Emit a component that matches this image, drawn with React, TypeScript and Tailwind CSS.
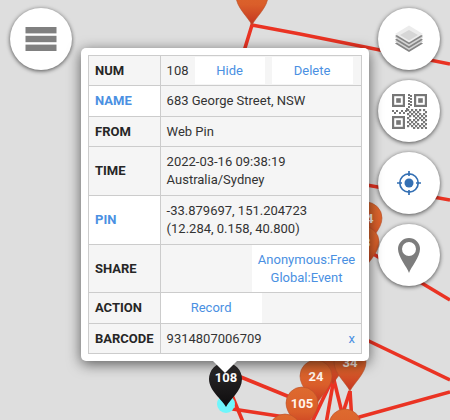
import type { ReactNode } from 'react';

interface Pin {
  x: number;
  y: number;
  label?: string;
}

// x / y is the tip of each pin
const pins: Pin[] = [
  { x: 252, y: 25 },
  { x: 366, y: 247, label: '24' },
  { x: 363, y: 271, label: '23' },
  { x: 333, y: 384 },
  { x: 316, y: 405, label: '24' },
  { x: 350, y: 391, label: '34' },
  { x: 302, y: 432, label: '105' },
  { x: 285, y: 459 },
  { x: 345, y: 454, label: '29' },
];

const routes = [
  'M226 110L252 25L300 34L450 64',
  'M350 182L450 200',
  'M350 240L450 300',
  'M350 332L450 380',
  'M345 421L450 392',
  'M226 371L302 402',
  'M222 371L243 422',
  'M226 408L285 417',
  'M333 378L311 424',
  'M334 378L326 424',
  'M333 376L344 421',
  'M350 391L340 422',
  'M350 391L352 422',
];

const MapPin = ({ x, y, label }: Pin) => (
  <g transform={`translate(${x} ${y})`}>
    <path
      d="M0 0C-4 -8 -16 -18 -16 -29A16 16 0 0 1 16 -29C16 -18 4 -8 0 0Z"
      fill="url(#pinFill)"
      stroke="#b9512a"
      strokeWidth="0.6"
    />
    {label && (
      <text y="-24" textAnchor="middle" className="fill-[#fff4ec] font-['Roboto'] text-[13px] font-bold">
        {label}
      </text>
    )}
  </g>
);

const MapLayer = () => (
  <svg
    className="absolute inset-0 h-full w-full"
    viewBox="0 0 450 420"
    preserveAspectRatio="xMidYMin slice"
    aria-hidden="true"
  >
    <defs>
      <linearGradient id="pinFill" x1="0" y1="0" x2="0" y2="1">
        <stop offset="0" stopColor="#de6a2f" />
        <stop offset="0.55" stopColor="#da5e2a" />
        <stop offset="1" stopColor="#c43420" />
      </linearGradient>
      <linearGradient id="activeFill" x1="0" y1="0" x2="0" y2="1">
        <stop offset="0" stopColor="#2e2c2d" />
        <stop offset="1" stopColor="#0e0c0d" />
      </linearGradient>
    </defs>
    <g fill="none" stroke="#ea3323" strokeWidth="3.6">
      {routes.map((d) => (
        <path key={d} d={d} />
      ))}
    </g>
    {pins.map((pin) => (
      <MapPin key={`${pin.x}-${pin.y}`} {...pin} />
    ))}
    {/* selected pin */}
    <circle cx="226" cy="404" r="9" fill="#6ff6fb" />
    <path d="M226 407C222 399 209 391 209 379A16.5 16.5 0 0 1 242 379C242 391 230 399 226 407Z" fill="url(#activeFill)" />
    <text x="226" y="382" textAnchor="middle" className="fill-white font-['Roboto'] text-[13px] font-bold">
      108
    </text>
  </svg>
);

const RoundButton = ({ label, children }: { label: string; children: ReactNode }) => (
  <button
    type="button"
    aria-label={label}
    className="flex size-[62px] shrink-0 items-center justify-center rounded-full bg-white shadow-[0_1px_4px_rgba(0,0,0,0.65)]"
  >
    {children}
  </button>
);

const MenuIcon = () => (
  <svg width="32" height="24" viewBox="0 0 32 24" fill="#808080">
    <rect x="0.5" width="31" height="6.4" />
    <rect x="0.5" y="8.8" width="31" height="6.4" />
    <rect x="0.5" y="17.6" width="31" height="6.4" />
  </svg>
);

const LayersIcon = () => (
  <svg width="30" height="28" viewBox="0 0 30 28">
    <path d="M1 18.5L15 27L29 18.5L15 10Z" fill="#858585" />
    <path d="M1 16.5L15 25L29 16.5L15 8Z" fill="#d4d4d4" />
    <path d="M1 14.8L15 23.3L29 14.8L15 6.5Z" fill="#858585" />
    <path d="M1 12.8L15 21.3L29 12.8L15 4.5Z" fill="#d4d4d4" />
    <path d="M1 11L15 19.3L29 11L15 3Z" fill="#858585" />
    <path d="M1 9L15 17.5L29 9L15 0.5Z" fill="#ececec" />
    <path d="M6 10L15 5L24 10L15 15.5Z" fill="#d6d6d6" />
  </svg>
);

const qrModules = [
  [16, 0], [18, 1], [16, 3], [18, 4], [16, 6], [18, 7], [16, 9], [18, 10], [16, 12],
  [0, 16], [2, 18], [4, 16], [7, 18], [9, 16], [11, 18], [13, 16], [14, 14],
];

const QrIcon = () => (
  <svg width="35" height="35" viewBox="0 0 35 35" fill="#777">
    {[[0, 0], [22, 0], [0, 22]].map(([x, y]) => (
      <g key={`${x}-${y}`} transform={`translate(${x} ${y})`}>
        <rect x="1.1" y="1.1" width="10.8" height="10.8" fill="none" stroke="#777" strokeWidth="2.2" />
        <rect x="4.2" y="4.2" width="4.6" height="4.6" />
      </g>
    ))}
    {qrModules.map(([x, y]) => (
      <rect key={`${x}-${y}`} x={x} y={y} width="2" height="2" />
    ))}
    {Array.from({ length: 100 }, (_, i) => [i % 10, Math.floor(i / 10)])
      .filter(([c, r]) => (c + r) % 2 === 0 && (c * 3 + r * 5) % 11 !== 4)
      .map(([c, r]) => (
        <rect key={`${c}-${r}`} x={15 + c * 2} y={15 + r * 2} width="2.2" height="2.2" />
      ))}
  </svg>
);

const LocateIcon = () => (
  <svg width="24" height="24" viewBox="0 0 24 24" fill="none" stroke="#3470b4" strokeWidth="1.7">
    <circle cx="12" cy="12" r="9.2" />
    <circle cx="12" cy="12" r="4.5" fill="#3470b4" stroke="none" />
    <path d="M12 0V5M12 19V24M0 12H5M19 12H24" />
  </svg>
);

const PlaceIcon = () => (
  <svg width="22" height="35" viewBox="0 0 22 35" fill="#7d7d7d">
    <path
      fillRule="evenodd"
      d="M11 35C9 29 0 19 0 11A11 11 0 0 1 22 11C22 19 13 29 11 35ZM11 4A7 7 0 1 0 11 18A7 7 0 1 0 11 4Z"
    />
  </svg>
);

const th = 'border border-[#ccc] px-[6px] text-left font-bold text-[#262626]';
const td = 'border border-[#ccc] px-[6px]';
const action = 'bg-white text-center text-[#4a90e2]';

const PinPopup = () => (
  <section className="relative mt-10 flex-1 self-start rounded-[5px] bg-white p-[7px] shadow-[0_3px_14px_rgba(0,0,0,0.6)]">
    <table className="w-full border-collapse bg-[#f5f5f5] text-[13px] leading-[18px] text-[#333]">
      <tbody>
        <tr className="h-[30px]">
          <th scope="row" className={`${th} w-[71px]`}>NUM</th>
          <td className={td}>
            <div className="flex items-center">
              <span className="w-7">108</span>
              <button type="button" className={`${action} h-[27px] w-[70px]`}>Hide</button>
              <button type="button" className={`${action} ml-[7px] h-[27px] w-[81px]`}>Delete</button>
            </div>
          </td>
        </tr>
        <tr className="h-[31px]">
          <th scope="row" className={`${th} bg-white`}>
            <a href="#name" className="text-[#4a90e2]">NAME</a>
          </th>
          <td className={td}>683 George Street, NSW</td>
        </tr>
        <tr className="h-[30px]">
          <th scope="row" className={th}>FROM</th>
          <td className={td}>Web Pin</td>
        </tr>
        <tr className="h-[49px]">
          <th scope="row" className={th}>TIME</th>
          <td className={td}>2022-03-16 09:38:19<br />Australia/Sydney</td>
        </tr>
        <tr className="h-[49px]">
          <th scope="row" className={`${th} bg-white`}>
            <a href="#pin" className="text-[#4a90e2]">PIN</a>
          </th>
          <td className={td}>-33.879697, 151.204723<br />(12.284, 0.158, 40.800)</td>
        </tr>
        <tr className="h-[48px]">
          <th scope="row" className={th}>SHARE</th>
          <td className="border border-[#ccc] p-0">
            <button type="button" className={`${action} ml-auto block h-[47px] w-[109px]`}>
              Anonymous:Free<br />Global:Event
            </button>
          </td>
        </tr>
        <tr className="h-[31px]">
          <th scope="row" className={th}>ACTION</th>
          <td className="border border-[#ccc] p-0">
            <button type="button" className={`${action} block h-[30px] w-[101px]`}>Record</button>
          </td>
        </tr>
        <tr className="h-[30px]">
          <th scope="row" className={th}>BARCODE</th>
          <td className={td}>
            <div className="flex justify-between">
              <span>9314807006709</span>
              <button type="button" className="text-[#4a90e2]">x</button>
            </div>
          </td>
        </tr>
      </tbody>
    </table>
    {/* pointer towards the selected pin */}
    <div className="absolute top-full left-1/2 h-3 w-6 -translate-x-1/2 bg-white [clip-path:polygon(0_0,100%_0,50%_100%)]"></div>
  </section>
);

export default function App() {
  return (
    <main className="relative min-h-screen overflow-hidden bg-[#dedede] font-['Roboto',sans-serif]">
      <MapLayer />
      <div className="relative flex gap-[9px] px-[10px] pt-2 pb-4">
        <RoundButton label="Menu"><MenuIcon /></RoundButton>
        <PinPopup />
        <nav className="flex flex-col gap-[10px]" aria-label="Map tools">
          <RoundButton label="Layers"><LayersIcon /></RoundButton>
          <RoundButton label="QR code"><QrIcon /></RoundButton>
          <RoundButton label="My location"><LocateIcon /></RoundButton>
          <RoundButton label="Drop pin"><PlaceIcon /></RoundButton>
        </nav>
      </div>
    </main>
  );
}
